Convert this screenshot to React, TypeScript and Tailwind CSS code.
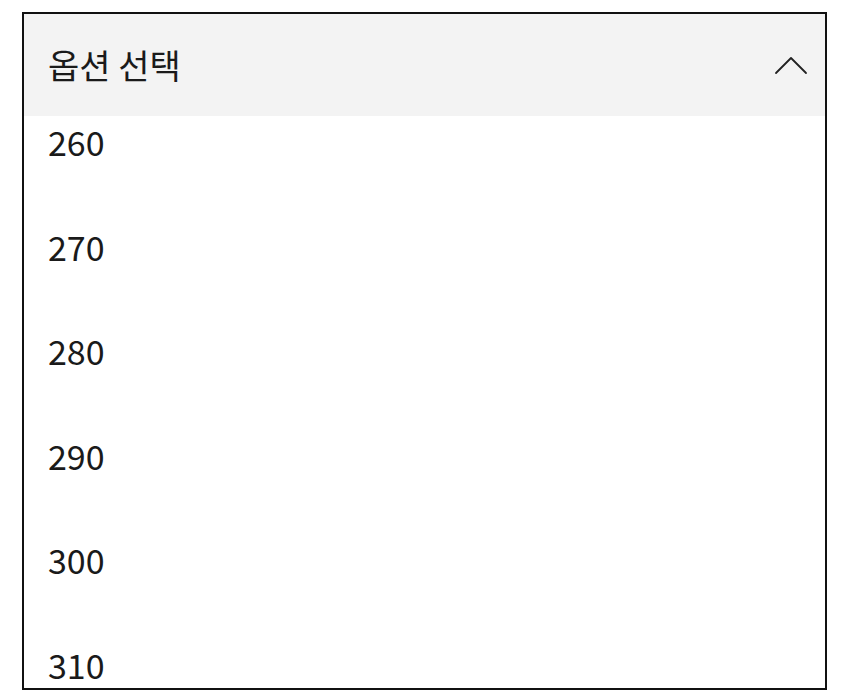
const options = [260, 270, 280, 290, 300, 310];

export default function App() {
  return (
    <div className="w-[849px] h-[697px] bg-white pt-3 pl-[22px] pr-[22px]" style={{ fontFamily: '"Noto Sans CJK KR", "Noto Sans", sans-serif' }}>
      <div className="h-[678px] border-2 border-[#111] flex flex-col overflow-hidden">
        <div className="h-[102px] shrink-0 bg-[#f3f3f3] flex items-center justify-between pl-[24px] pr-[17px]">
          <span className="text-[34px] leading-none text-[#1a1a1a]">옵션 선택</span>
          <svg width="34" height="20" viewBox="0 0 34 20" fill="none" className="mt-[2px]">
            <path d="M2 17 L17 2 L32 17" stroke="#222" strokeWidth="1.8" strokeLinecap="round" strokeLinejoin="round" />
          </svg>
        </div>
        <div className="flex-1 overflow-hidden">
          <div className="-mt-[26px]">
            {options.map((o) => (
              <div key={o} className="h-[104.5px] flex items-center pl-[24px] text-[34px] leading-none text-[#1a1a1a]">
                {o}
              </div>
            ))}
          </div>
        </div>
      </div>
    </div>
  );
}
